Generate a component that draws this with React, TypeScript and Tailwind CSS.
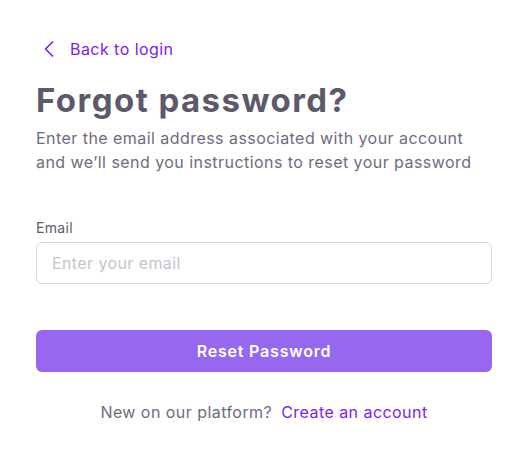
export default function App() {
  return (
    <div className="min-h-screen bg-white font-['Inter',sans-serif]">
      <div className="pl-[36px] pr-[25px] pt-[37px]">
        <a href="#" className="flex items-center gap-[15px] text-[16px] leading-6 tracking-[0.45px] text-[#7a22f0]">
          <svg width="12" height="18" viewBox="0 0 12 18" fill="none" className="ml-[7px]">
            <path d="M9.5 2 L2.5 9 L9.5 16" stroke="currentColor" strokeWidth="1.7" strokeLinecap="round" strokeLinejoin="round" />
          </svg>
          <span>Back to login</span>
        </a>

        <h1 className="mt-[18px] text-[33px] leading-[42px] font-bold tracking-[1.45px] text-[#5d596c]">
          Forgot password?
        </h1>
        <p className="mt-[5px] text-[16px] leading-6 tracking-[0.45px] text-[#6f6b7d]">
          Enter the email address associated with your account and we’ll send you instructions to reset your password
        </p>

        <div className="mt-[44px]">
          <label className="block text-[14px] leading-5 tracking-[0.3px] text-[#5d596c]">Email</label>
          <input
            type="email"
            placeholder="Enter your email"
            className="mt-[4px] block h-[42px] w-full rounded-[6px] border border-[#d8d6de] px-[15px] text-[16px] tracking-[0.4px] text-[#6f6b7d] outline-none placeholder:text-[#c6c4cc]"
          />
        </div>

        <button className="mt-[46px] flex h-[42px] w-full items-center justify-center rounded-[6px] bg-[#9867f0] text-[16px] font-semibold tracking-[0.8px] text-white">
          Reset Password
        </button>

        <div className="mt-[28px] flex justify-center gap-[9px] text-[16px] leading-6 tracking-[0.45px]">
          <span className="text-[#6f6b7d]">New on our platform?</span>
          <a href="#" className="text-[#7a1ef0]">Create an account</a>
        </div>
      </div>
    </div>
  );
}
